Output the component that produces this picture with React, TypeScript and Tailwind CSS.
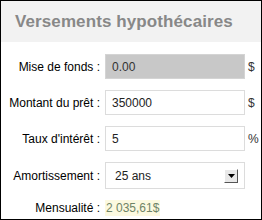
import React from 'react';

const font = { fontFamily: '"Liberation Sans", Arial, sans-serif' };

function Row({ label, children, unit }: { label: string; children: React.ReactNode; unit?: string }) {
  return (
    <div className="grid grid-cols-[104px_140px_1fr] items-center">
      <span className="text-right pr-[5px] text-[12px] text-black">{label}</span>
      {children}
      <span className="pl-[3px] text-[12px] text-[#333]">{unit}</span>
    </div>
  );
}

export default function App() {
  return (
    <div style={font} className="w-[262px] h-[220px] border border-black bg-white overflow-hidden">
      <div className="h-[41px] bg-[#f2f2f2] flex items-center pl-[14px]">
        <h1 className="text-[17px] font-bold text-[#888] tracking-[0.1px]">Versements hypothécaires</h1>
      </div>

      <div className="flex flex-col gap-[11px] pt-[12px]">
        <Row label="Mise de fonds :" unit="$">
          <div className="h-[25px] bg-[#c8c8c8] border border-[#d4d4d4] flex items-center pl-[6px] text-[12px] text-[#333]">
            0.00
          </div>
        </Row>
        <Row label="Montant du prêt :" unit="$">
          <div className="h-[25px] bg-white border border-[#dcdcdc] flex items-center pl-[6px] text-[12px] text-[#222]">
            350000
          </div>
        </Row>
        <Row label="Taux d'intérêt :" unit="%">
          <div className="h-[25px] bg-white border border-[#dcdcdc] flex items-center pl-[6px] text-[12px] text-[#222]">
            5
          </div>
        </Row>
        <Row label="Amortissement :">
          <div className="h-[27px] bg-white border border-[#dcdcdc] flex items-center justify-between pl-[9px] pr-[6px] text-[12px] text-[#222]">
            <span>25 ans</span>
            <span className="w-[14px] h-[14px] bg-[#e8e8e8] border-t border-l border-t-white border-l-white border-r border-b border-r-[#555] border-b-[#555] flex items-center justify-center">
              <svg width="7" height="4" viewBox="0 0 7 4">
                <path d="M0 0h7L3.5 4z" fill="#000" />
              </svg>
            </span>
          </div>
        </Row>
        <div className="grid grid-cols-[104px_1fr] items-center -mt-[1px]">
          <span className="text-right pr-[5px] text-[12px] text-black">Mensualité :</span>
          <span className="justify-self-start bg-[#fcf9e0] px-[1px] text-[12px] text-[#6f8466] leading-[16px]">2 035,61$</span>
        </div>
      </div>
    </div>
  );
}
